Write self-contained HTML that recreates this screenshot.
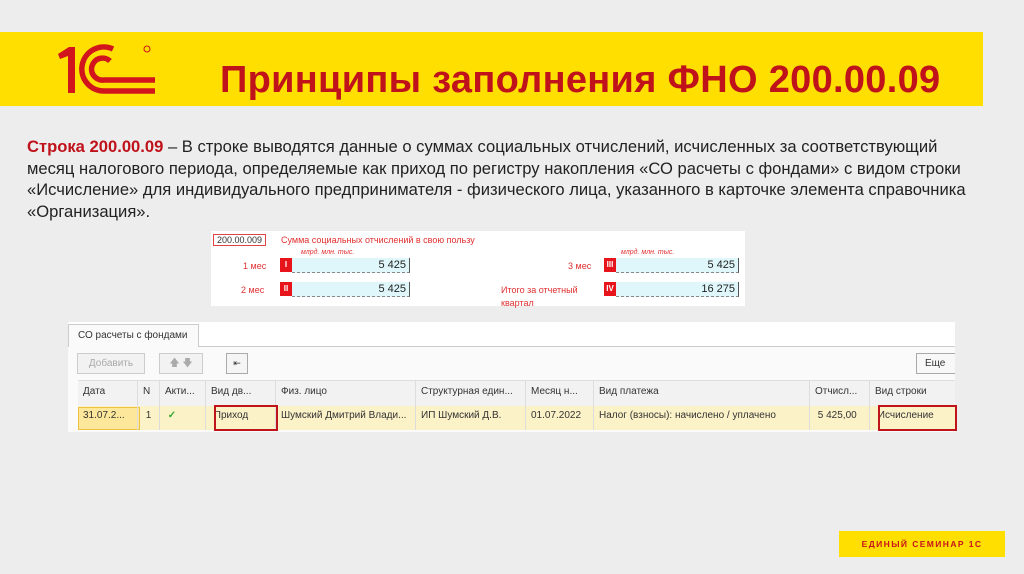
<!DOCTYPE html><html><head><meta charset="utf-8"><style>
body{margin:0;width:1024px;height:574px;background:#ededed;position:relative;overflow:hidden;font-family:"Liberation Sans",sans-serif}
.a{position:absolute}
.band{left:0;top:32px;width:983px;height:74px;background:#ffdf00}
.title{left:220px;top:59px;font-size:38px;font-weight:bold;color:#c0121a;white-space:nowrap;letter-spacing:0.3px}
.txt{left:27px;top:136px;width:990px;font-size:16.6px;line-height:21.7px;color:#222;white-space:nowrap}
.form{left:211px;top:231px;width:534px;height:75px;background:#fff;font-size:9px;color:#e03030}
.fld{position:absolute;height:14px;background:#dff7fa;border-right:1px solid #555;border-bottom:1px dashed #888;font-size:11px;color:#222;text-align:right;padding-right:3px;line-height:14px}
.rn{position:absolute;width:12px;height:14px;background:#e8141c;color:#fff;font-size:8px;font-weight:bold;text-align:center;line-height:14px}
.tbl{left:68px;top:322px;width:887px;height:110px;background:#fafafa;font-size:10px;color:#333;overflow:hidden}
.cell{position:absolute;top:0;height:100%;border-right:1px solid #ddd;padding-left:5px;line-height:24px;white-space:nowrap;overflow:hidden}
</style></head><body>
<div class="a band"></div>
<svg class="a" style="left:55px;top:44px" width="105" height="55" viewBox="0 0 105 55">
<path d="M3 10 L14 3 H20 V49 H13 V12 L5 15Z" fill="#d2141c"/>
<g fill="none" stroke="#d2141c" stroke-width="5.5">
<path d="M58 5 A22 22 0 1 0 49 47 H100"/>
<path d="M55 17 A11 11 0 1 0 49 36 H100"/>
</g>
<circle cx="92" cy="5" r="3" fill="none" stroke="#d2141c" stroke-width="1"/>
</svg>
<div class="a title">Принципы заполнения ФНО 200.00.09</div>
<div class="a txt"><b style="color:#c0121a">Строка 200.00.09</b> – В строке выводятся данные о суммах социальных отчислений, исчисленных за соответствующий<br>месяц налогового периода, определяемые как приход по регистру накопления «СО расчеты с фондами» с видом строки<br>«Исчисление» для индивидуального предпринимателя - физического лица, указанного в карточке элемента справочника<br>«Организация».</div>
<div class="a form">
<div class="a" style="left:2px;top:3px;border:1px solid #d44;color:#333;padding:0 3px;font-size:9px">200.00.009</div>
<div class="a" style="left:70px;top:4px">Сумма социальных отчислений в свою пользу</div>
<div class="a" style="left:90px;top:18px;font-size:7px;font-style:italic">млрд. млн. тыс.</div>
<div class="a" style="left:410px;top:18px;font-size:7px;font-style:italic">млрд. млн. тыс.</div>
<div class="a" style="left:32px;top:30px">1 мес</div><div class="rn" style="left:69px;top:27px">I</div><div class="fld" style="left:81px;top:27px;width:114px">5 425</div>
<div class="a" style="left:30px;top:54px">2 мес</div><div class="rn" style="left:69px;top:51px">II</div><div class="fld" style="left:81px;top:51px;width:114px">5 425</div>
<div class="a" style="left:357px;top:30px">3 мес</div><div class="rn" style="left:393px;top:27px">III</div><div class="fld" style="left:405px;top:27px;width:119px">5 425</div>
<div class="a" style="left:290px;top:53px;line-height:13px">Итого за отчетный<br>квартал</div><div class="rn" style="left:393px;top:51px">IV</div><div class="fld" style="left:405px;top:51px;width:119px">16 275</div>
</div>
<div class="a tbl">
<div class="a" style="left:0;top:0;width:887px;height:24px;background:#fff;border-bottom:1px solid #ccc"></div>
<div class="a" style="left:0;top:2px;width:120px;height:22px;background:#fafafa;border:1px solid #ccc;border-bottom:none;line-height:22px;padding-left:9px">СО расчеты с фондами</div>
<div class="a" style="left:9px;top:31px;width:66px;height:19px;border:1px solid #ccc;background:#f2f2f2;color:#aaa;text-align:center;line-height:19px">Добавить</div>
<div class="a" style="left:91px;top:31px;width:42px;height:19px;border:1px solid #ccc;background:#f2f2f2;color:#aaa;text-align:center;line-height:19px">🡅 🡇</div>
<div class="a" style="left:158px;top:31px;width:20px;height:19px;border:1px solid #aaa;background:#f5f5f5;text-align:center;line-height:19px;font-size:9px">⇤</div>
<div class="a" style="left:848px;top:31px;width:39px;height:19px;border:1px solid #aaa;border-right:none;background:#f8f8f8;line-height:19px;padding-left:8px">Еще</div>
<div class="a" style="left:10px;top:58px;width:877px;height:26px;background:#f2f2f2;border-top:1px solid #ddd;border-bottom:1px solid #ddd"></div>
<div class="a" style="left:10px;top:84px;width:877px;height:24px;background:#fcf2c8"></div>
<div class="a" style="left:10px;top:85px;width:60px;height:21px;background:#fde79a;border:1px solid #f0c040"></div>
<div class="a" style="left:10px;top:58px;width:877px;height:50px">
<div class="cell" style="left:0;width:54px">Дата<br>31.07.2...</div>
<div class="cell" style="left:60px;width:16px">N<br>&nbsp;1</div>
<div class="cell" style="left:82px;width:40px">Акти...<br><span style="color:#3a3;font-weight:bold">&nbsp;✓</span></div>
<div class="cell" style="left:128px;width:64px">Вид дв...<br>&nbsp;Приход</div>
<div class="cell" style="left:198px;width:134px">Физ. лицо<br>Шумский Дмитрий Влади...</div>
<div class="cell" style="left:338px;width:104px">Структурная един...<br>ИП Шумский Д.В.</div>
<div class="cell" style="left:448px;width:62px">Месяц н...<br>01.07.2022</div>
<div class="cell" style="left:516px;width:210px">Вид платежа<br>Налог (взносы): начислено / уплачено</div>
<div class="cell" style="left:732px;width:54px">Отчисл...<br>&nbsp;5 425,00</div>
<div class="cell" style="left:792px;width:80px;border:none">Вид строки<br>&nbsp;Исчисление</div>
</div>
</div>
<div class="a" style="left:214px;top:405px;width:60px;height:22px;border:2px solid #c0141c"></div>
<div class="a" style="left:878px;top:405px;width:75px;height:22px;border:2px solid #c0141c"></div>
<div class="a" style="left:839px;top:531px;width:166px;height:26px;background:#ffdf00;color:#c8141c;font-size:8.5px;font-weight:bold;letter-spacing:1.4px;text-align:center;line-height:26px">ЕДИНЫЙ СЕМИНАР 1С</div>
</body></html>
